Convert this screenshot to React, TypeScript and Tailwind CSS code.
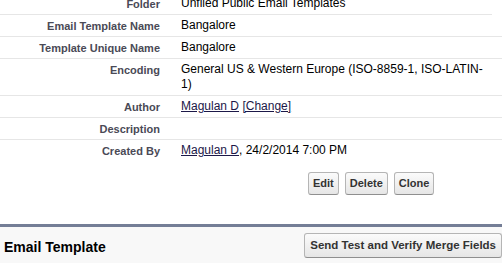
import React from "react";

const rows: { label: string; value: React.ReactNode }[] = [
  { label: "Folder", value: "Unfiled Public Email Templates" },
  { label: "Email Template Name", value: "Bangalore" },
  { label: "Template Unique Name", value: "Bangalore" },
  {
    label: "Encoding",
    value: "General US & Western Europe (ISO-8859-1, ISO-LATIN-1)",
  },
  {
    label: "Author",
    value: (
      <>
        <a className="underline text-[#1c1848]">Magulan D</a>{" "}
        <a className="underline text-[#1c1848]">[Change]</a>
      </>
    ),
  },
  { label: "Description", value: "" },
];

const Btn = ({ children }: { children: React.ReactNode }) => (
  <button className="h-[23px] px-[4px] rounded-[3px] border border-[#b5b5b5] border-b-[#8f8f8f] bg-gradient-to-b from-[#fbfbfb] to-[#e6e6e6] text-[11px] font-bold text-[#333]">
    {children}
  </button>
);

export default function App() {
  return (
    <div className="w-[502px] h-[263px] overflow-hidden bg-white font-['Liberation_Sans',Arial,sans-serif]">
      <div className="-mt-[7px]">
        {rows.map((r, i) => (
          <div
            key={r.label}
            className={`flex border-b border-[#e6e6e6] ${i === 0 ? "mr-[10px]" : ""}`}
          >
            <div className="w-[170px] shrink-0 pr-[10px] py-[3px] text-right text-[11px] leading-[14px] font-bold text-[#4a4a56] pt-[4px]">
              {r.label}
            </div>
            <div className="w-[320px] pl-[11px] py-[3px] text-[12px] leading-[15px] text-black">
              {r.value}
            </div>
          </div>
        ))}
        <div className="flex">
          <div className="w-[170px] shrink-0 pr-[10px] py-[3px] text-right text-[11px] leading-[14px] font-bold text-[#4a4a56] pt-[4px]">
            Created By
          </div>
          <div className="pl-[11px] py-[3px] text-[12px] leading-[15px] text-black">
            <a className="underline text-[#1c1848]">Magulan D</a>, 24/2/2014 7:00 PM
          </div>
        </div>
      </div>

      <div className="flex gap-[6px] pl-[308px] pt-[11px] h-[63px]">
        <Btn>Edit</Btn>
        <Btn>Delete</Btn>
        <Btn>Clone</Btn>
      </div>

      <div className="border-t-[3px] border-[#747e96] bg-[#f8f8f8] h-[40px] flex justify-between items-start pl-[4px] pr-0 pt-[6px]">
        <h2 className="text-[14px] font-bold text-black mt-[4px]">Email Template</h2>
        <button className="h-[25px] px-[5px] rounded-[3px] border border-[#b5b5b5] border-b-[#8f8f8f] bg-gradient-to-b from-[#fbfbfb] to-[#e6e6e6] text-[11.5px] font-bold text-[#333]">
          Send Test and Verify Merge Fields
        </button>
      </div>
    </div>
  );
}
